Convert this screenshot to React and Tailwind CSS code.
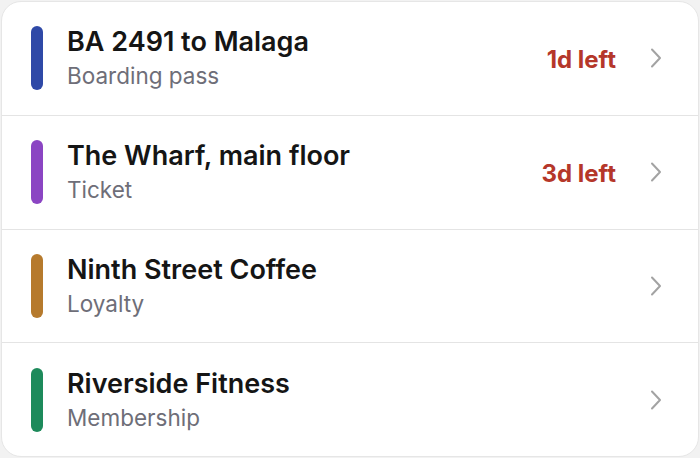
import React from 'react'

const passes = [
  { title: 'BA 2491 to Malaga', kind: 'Boarding pass', color: 'bg-[#2f49a7]', due: '1d left' },
  { title: 'The Wharf, main floor', kind: 'Ticket', color: 'bg-[#8b45c3]', due: '3d left' },
  { title: 'Ninth Street Coffee', kind: 'Loyalty', color: 'bg-[#b67a2d]' },
  { title: 'Riverside Fitness', kind: 'Membership', color: 'bg-[#1d8a5b]' },
]

function Chevron() {
  return (
    <svg width="12" height="20" viewBox="0 0 12 20" fill="none" className="shrink-0">
      <path d="M2 1.5 L10 10 L2 18.5" stroke="#a3a3a3" strokeWidth="2" strokeLinecap="round" strokeLinejoin="round" />
    </svg>
  )
}

export default function App() {
  return (
    <div className="min-h-screen bg-[#f2f2f2] p-px font-['Inter',sans-serif]">
      <div className="h-[456px] bg-white border border-[#e6e6e6] rounded-[20px] overflow-hidden flex flex-col">
        {passes.map((p, i) => (
          <div
            key={p.title}
            className={`flex-1 flex items-center pl-[29px] pr-[36px] ${i > 0 ? 'border-t border-[#e4e4e4]' : ''}`}
          >
            <div className={`w-3 h-16 rounded-full ${p.color}`} />
            <div className="ml-[24px] flex-1 min-w-0">
              <div className="text-[27px] leading-8 font-semibold text-[#151515]">{p.title}</div>
              <div className="text-[22.5px] leading-7 mt-1 text-[#6e6e78]">{p.kind}</div>
            </div>
            {p.due && <div className="text-[24px] font-bold text-[#b5372a] mr-[34px] mt-[3px]">{p.due}</div>}
            <Chevron />
          </div>
        ))}
      </div>
    </div>
  )
}
